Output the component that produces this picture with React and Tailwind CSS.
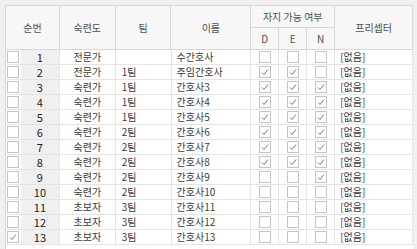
import React from "react"

const rows = [
  { no: 1, level: "전문가", team: "", name: "수간호사", d: false, e: false, n: false },
  { no: 2, level: "전문가", team: "1팀", name: "주임간호사", d: true, e: true, n: false },
  { no: 3, level: "숙련가", team: "1팀", name: "간호사3", d: true, e: true, n: true },
  { no: 4, level: "숙련가", team: "1팀", name: "간호사4", d: true, e: true, n: true },
  { no: 5, level: "숙련가", team: "1팀", name: "간호사5", d: true, e: true, n: true },
  { no: 6, level: "숙련가", team: "2팀", name: "간호사6", d: true, e: true, n: true },
  { no: 7, level: "숙련가", team: "2팀", name: "간호사7", d: true, e: true, n: true },
  { no: 8, level: "숙련가", team: "2팀", name: "간호사8", d: true, e: true, n: true },
  { no: 9, level: "숙련가", team: "2팀", name: "간호사9", d: false, e: false, n: true },
  { no: 10, level: "숙련가", team: "2팀", name: "간호사10", d: false, e: false, n: false },
  { no: 11, level: "초보자", team: "3팀", name: "간호사11", d: false, e: false, n: false },
  { no: 12, level: "초보자", team: "3팀", name: "간호사12", d: false, e: false, n: false },
  { no: 13, level: "초보자", team: "3팀", name: "간호사13", d: false, e: false, n: false, picked: true },
]

function Box({ checked }) {
  return (
    <div className="w-[12px] h-[12px] border border-[#c4c4c4] bg-white flex items-center justify-center">
      {checked && (
        <svg width="8" height="8" viewBox="0 0 8 8">
          <polyline points="1,4.5 3,6.5 7,1.5" fill="none" stroke="#666" strokeWidth="0.9" />
        </svg>
      )}
    </div>
  )
}

export default function App() {
  return (
    <div
      className="w-[417px] h-[249px] bg-[#f0f0f0] pt-[5px] pl-[5px] overflow-hidden text-[10px] leading-[12px] text-[#3a3a3a]"
      style={{ fontFamily: '"Malgun Gothic", "Noto Sans CJK KR", sans-serif' }}
    >
      <div className="w-[408px] h-[244px] bg-white border-l border-t border-[#d6d6d6]">
        {/* header */}
        <div className="flex bg-[#f7f7f7] text-[#505050]">
          <div className="w-[54px] h-[44px] border-r border-b border-[#d6d6d6] flex items-center justify-center">순번</div>
          <div className="w-[56px] h-[44px] border-r border-b border-[#d6d6d6] flex items-center justify-center">숙련도</div>
          <div className="w-[56px] h-[44px] border-r border-b border-[#d6d6d6] flex items-center justify-center">팀</div>
          <div className="w-[80px] h-[44px] border-r border-b border-[#d6d6d6] flex items-center justify-center">이름</div>
          <div className="w-[84px] flex flex-col">
            <div className="h-[22px] border-r border-b border-[#d6d6d6] flex items-center justify-center">자지 가능 여부</div>
            <div className="flex">
              <div className="w-[28px] h-[22px] border-r border-b border-[#d6d6d6] flex items-center justify-center">D</div>
              <div className="w-[28px] h-[22px] border-r border-b border-[#d6d6d6] flex items-center justify-center">E</div>
              <div className="w-[28px] h-[22px] border-r border-b border-[#d6d6d6] flex items-center justify-center">N</div>
            </div>
          </div>
          <div className="w-[78px] h-[44px] border-r border-b border-[#d6d6d6] flex items-center justify-center">프리셉터</div>
        </div>

        {/* rows */}
        {rows.map((r) => (
          <div key={r.no} className="flex h-[15px]">
            <div className="w-[15px] h-[15px] border-b border-[#e4e4e4] flex items-center justify-center">
              <Box checked={r.picked} />
            </div>
            <div className="w-[39px] h-[15px] bg-[#f0f0f0] text-[#222] text-[11px] border-r border-b border-[#e4e4e4] flex items-center justify-center">{r.no}</div>
            <div className="w-[56px] h-[15px] border-r border-b border-[#e4e4e4] flex items-center justify-center">{r.level}</div>
            <div className="w-[56px] h-[15px] border-r border-b border-[#e4e4e4] flex items-center pl-[6px]">{r.team}</div>
            <div className="w-[80px] h-[15px] border-r border-b border-[#e4e4e4] flex items-center pl-[5px]">{r.name}</div>
            <div className="w-[28px] h-[15px] border-r border-b border-[#e4e4e4] flex items-center justify-center"><Box checked={r.d} /></div>
            <div className="w-[28px] h-[15px] border-r border-b border-[#e4e4e4] flex items-center justify-center"><Box checked={r.e} /></div>
            <div className="w-[28px] h-[15px] border-r border-b border-[#e4e4e4] flex items-center justify-center"><Box checked={r.n} /></div>
            <div className="w-[78px] h-[15px] border-r border-b border-[#e4e4e4] flex items-center pl-[5px]">[없음]</div>
          </div>
        ))}
      </div>
    </div>
  )
}
